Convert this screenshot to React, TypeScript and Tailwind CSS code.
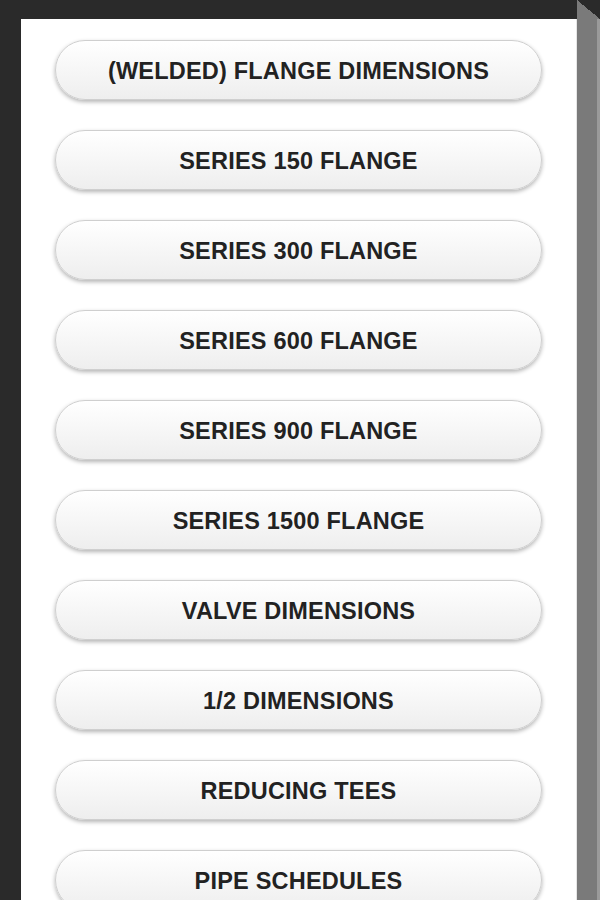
import React from "react";

const items = [
  "(WELDED) FLANGE DIMENSIONS",
  "SERIES 150 FLANGE",
  "SERIES 300 FLANGE",
  "SERIES 600 FLANGE",
  "SERIES 900 FLANGE",
  "SERIES 1500 FLANGE",
  "VALVE DIMENSIONS",
  "1/2 DIMENSIONS",
  "REDUCING TEES",
  "PIPE SCHEDULES",
];

export default function App() {
  return (
    <div className="w-[600px] h-[900px] overflow-hidden flex bg-[#2a2a2a] font-['Liberation_Sans',Arial,sans-serif]">
      <div className="w-[21px] shrink-0 bg-[#2a2a2a]" />
      <div className="flex-1 flex flex-col">
        <div className="h-[19px] shrink-0 bg-[#2a2a2a]" />
        <div className="flex-1 bg-white border-r border-[#e6e6e6] pt-[21px] pl-[34px] pr-[34px] flex flex-col gap-[30px]">
          {items.map((t) => (
            <button
              key={t}
              className="h-[60px] shrink-0 w-full rounded-full border border-[#cfcfcf] bg-[linear-gradient(to_bottom,#ffffff,#eeeeee)] shadow-[0_2px_4px_rgba(0,0,0,0.3)] text-[#222] font-bold text-[23.5px] tracking-[0.2px] pt-[4px] flex items-center justify-center"
            >
              {t}
            </button>
          ))}
        </div>
      </div>
      <div className="w-[23px] shrink-0 flex flex-col">
        <div className="h-[19px] bg-[linear-gradient(to_bottom_left,#2a2a2a_50%,#7a7a7a_50%)]" />
        <div className="flex-1 bg-[#7a7a7a] border-r-[3px] border-[#9a9a9a]" />
      </div>
    </div>
  );
}
